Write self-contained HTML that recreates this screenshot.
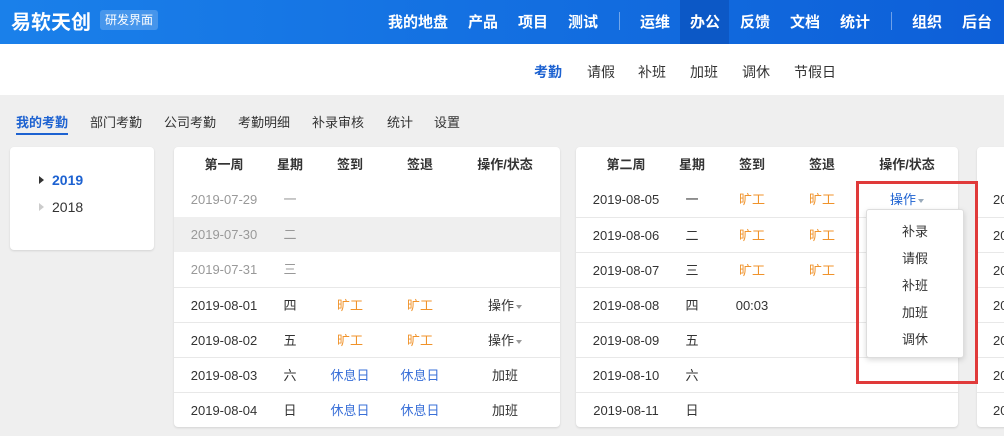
<!DOCTYPE html>
<html><head><meta charset="utf-8"><style>
*{margin:0;padding:0;box-sizing:border-box}
body{width:1004px;height:436px;overflow:hidden;background:#efefef;font-family:"Liberation Sans","Noto Sans CJK SC",sans-serif;position:relative;color:#333;font-size:13px}
.a{position:absolute;white-space:nowrap}
.hdr{position:absolute;left:0;top:0;width:1004px;height:44px;background:linear-gradient(90deg,#1a80ea,#0d5fd8)}
.nav{color:#fff;font-size:15px;font-weight:bold;top:11px}
.sub{position:absolute;left:0;top:44px;width:1004px;height:51px;background:#fff}
.sn{font-size:14px;top:62px;color:#333}
.tab{font-size:13px;top:112px;color:#333}
.card{position:absolute;background:#fff;border-radius:4px;box-shadow:0 1px 2px rgba(0,0,0,.12)}
.row{position:absolute;left:0;height:35px;border-top:1px solid #e8e8e8}
.c{position:absolute;text-align:center;font-size:13px;line-height:35px;transform:translateX(-50%);white-space:nowrap}
.h{font-weight:bold;color:#333}
.g{color:#999}.o{color:#f0932b}.b{color:#3a70d8}
.tri{display:inline-block;width:0;height:0;border-left:3px solid transparent;border-right:3px solid transparent;border-top:4px solid #999;vertical-align:middle;margin-left:2px}
</style></head><body>
<div class="hdr"></div>
<div class="a" style="left:11px;top:6px;color:#fff;font-size:20px;font-weight:bold">易软天创</div>
<div class="a" style="left:100px;top:10px;height:20px;padding:0 5px;background:rgba(255,255,255,.2);border-radius:3px;color:#fff;font-size:12px;line-height:20px">研发界面</div>
<div class="a nav" style="left:388px">我的地盘</div>
<div class="a nav" style="left:468px">产品</div>
<div class="a nav" style="left:518px">项目</div>
<div class="a nav" style="left:568px">测试</div>
<div class="a" style="left:619px;top:12px;width:1px;height:18px;background:rgba(255,255,255,.4)"></div>
<div class="a nav" style="left:640px">运维</div>
<div class="a" style="left:680px;top:0;width:49px;height:44px;background:#0c58c6"></div>
<div class="a nav" style="left:690px">办公</div>
<div class="a nav" style="left:740px">反馈</div>
<div class="a nav" style="left:790px">文档</div>
<div class="a nav" style="left:840px">统计</div>
<div class="a" style="left:891px;top:12px;width:1px;height:18px;background:rgba(255,255,255,.4)"></div>
<div class="a nav" style="left:912px">组织</div>
<div class="a nav" style="left:962px">后台</div>
<div class="sub"></div>
<div class="a sn" style="left:534px;color:#1d62d1;font-weight:bold">考勤</div>
<div class="a sn" style="left:587px">请假</div>
<div class="a sn" style="left:638px">补班</div>
<div class="a sn" style="left:690px">加班</div>
<div class="a sn" style="left:742px">调休</div>
<div class="a sn" style="left:794px">节假日</div>
<div class="a tab" style="left:16px;color:#1d62d1;font-weight:bold">我的考勤</div>
<div class="a" style="left:16px;top:133px;width:52px;height:2px;background:#1d62d1"></div>
<div class="a tab" style="left:90px">部门考勤</div>
<div class="a tab" style="left:164px">公司考勤</div>
<div class="a tab" style="left:238px">考勤明细</div>
<div class="a tab" style="left:312px">补录审核</div>
<div class="a tab" style="left:387px">统计</div>
<div class="a tab" style="left:434px">设置</div>

<div class="card" style="left:10px;top:147px;width:144px;height:103px"></div>
<div class="a" style="left:39px;top:176px;width:0;height:0;border-top:4px solid transparent;border-bottom:4px solid transparent;border-left:5px solid #333"></div>
<div class="a" style="left:52px;top:172px;color:#1d62d1;font-weight:bold;font-size:14px">2019</div>
<div class="a" style="left:39px;top:203px;width:0;height:0;border-top:4px solid transparent;border-bottom:4px solid transparent;border-left:5px solid #ccc"></div>
<div class="a" style="left:52px;top:199px;font-size:14px">2018</div>

<!-- card1 -->
<div class="card" style="left:174px;top:147px;width:386px;height:280px">
 <div class="row" style="top:0;border:none;width:386px">
  <div class="c h" style="left:50px">第一周</div><div class="c h" style="left:116px">星期</div><div class="c h" style="left:176px">签到</div><div class="c h" style="left:246px">签退</div><div class="c h" style="left:331px">操作/状态</div></div>
 <div class="row" style="top:35px;border:none;width:386px"><div class="c g" style="left:50px">2019-07-29</div><div class="c g" style="left:116px">一</div></div>
 <div class="row" style="top:70px;border:none;width:386px;background:#efefef"><div class="c g" style="left:50px">2019-07-30</div><div class="c g" style="left:116px">二</div></div>
 <div class="row" style="top:105px;border:none;width:386px"><div class="c g" style="left:50px">2019-07-31</div><div class="c g" style="left:116px">三</div></div>
 <div class="row" style="top:140px;width:386px"><div class="c" style="left:50px">2019-08-01</div><div class="c" style="left:116px">四</div><div class="c o" style="left:176px">旷工</div><div class="c o" style="left:246px">旷工</div><div class="c" style="left:331px">操作<span class="tri"></span></div></div>
 <div class="row" style="top:175px;width:386px"><div class="c" style="left:50px">2019-08-02</div><div class="c" style="left:116px">五</div><div class="c o" style="left:176px">旷工</div><div class="c o" style="left:246px">旷工</div><div class="c" style="left:331px">操作<span class="tri"></span></div></div>
 <div class="row" style="top:210px;width:386px"><div class="c" style="left:50px">2019-08-03</div><div class="c" style="left:116px">六</div><div class="c b" style="left:176px">休息日</div><div class="c b" style="left:246px">休息日</div><div class="c" style="left:331px">加班</div></div>
 <div class="row" style="top:245px;width:386px"><div class="c" style="left:50px">2019-08-04</div><div class="c" style="left:116px">日</div><div class="c b" style="left:176px">休息日</div><div class="c b" style="left:246px">休息日</div><div class="c" style="left:331px">加班</div></div>
</div>

<!-- card2 -->
<div class="card" style="left:576px;top:147px;width:382px;height:280px">
 <div class="row" style="top:0;border:none;width:382px">
  <div class="c h" style="left:50px">第二周</div><div class="c h" style="left:116px">星期</div><div class="c h" style="left:176px">签到</div><div class="c h" style="left:246px">签退</div><div class="c h" style="left:331px">操作/状态</div></div>
 <div class="row" style="top:35px;border:none;width:382px"><div class="c" style="left:50px">2019-08-05</div><div class="c" style="left:116px">一</div><div class="c o" style="left:176px">旷工</div><div class="c o" style="left:246px">旷工</div><div class="c" style="left:331px;color:#1d62d1">操作<span class="tri" style="border-top-color:#9ab"></span></div></div>
 <div class="row" style="top:70px;width:382px"><div class="c" style="left:50px">2019-08-06</div><div class="c" style="left:116px">二</div><div class="c o" style="left:176px">旷工</div><div class="c o" style="left:246px">旷工</div></div>
 <div class="row" style="top:105px;width:382px"><div class="c" style="left:50px">2019-08-07</div><div class="c" style="left:116px">三</div><div class="c o" style="left:176px">旷工</div><div class="c o" style="left:246px">旷工</div></div>
 <div class="row" style="top:140px;width:382px"><div class="c" style="left:50px">2019-08-08</div><div class="c" style="left:116px">四</div><div class="c" style="left:176px">00:03</div></div>
 <div class="row" style="top:175px;width:382px"><div class="c" style="left:50px">2019-08-09</div><div class="c" style="left:116px">五</div></div>
 <div class="row" style="top:210px;width:382px"><div class="c" style="left:50px">2019-08-10</div><div class="c" style="left:116px">六</div></div>
 <div class="row" style="top:245px;width:382px"><div class="c" style="left:50px">2019-08-11</div><div class="c" style="left:116px">日</div></div>
</div>

<!-- card3 -->
<div class="card" style="left:977px;top:147px;width:40px;height:280px">
 <div class="row" style="top:35px;border:none;width:40px"><div class="a" style="left:16px;line-height:35px">2019</div></div>
 <div class="row" style="top:70px;width:40px"><div class="a" style="left:16px;line-height:35px">2019</div></div>
 <div class="row" style="top:105px;width:40px"><div class="a" style="left:16px;line-height:35px">2019</div></div>
 <div class="row" style="top:140px;width:40px"><div class="a" style="left:16px;line-height:35px">2019</div></div>
 <div class="row" style="top:175px;width:40px"><div class="a" style="left:16px;line-height:35px">2019</div></div>
 <div class="row" style="top:210px;width:40px"><div class="a" style="left:16px;line-height:35px">2019</div></div>
 <div class="row" style="top:245px;width:40px"><div class="a" style="left:16px;line-height:35px">2019</div></div>
</div>

<!-- dropdown -->
<div class="a" style="left:866px;top:209px;width:98px;height:149px;background:#fff;border:1px solid #ddd;border-radius:3px;box-shadow:0 2px 6px rgba(0,0,0,.15)"></div>
<div class="a" style="left:902px;top:221px">补录</div>
<div class="a" style="left:902px;top:248px">请假</div>
<div class="a" style="left:902px;top:275px">补班</div>
<div class="a" style="left:902px;top:302px">加班</div>
<div class="a" style="left:902px;top:329px">调休</div>
<div class="a" style="left:856px;top:181px;width:122px;height:203px;border:3px solid #e03a3a"></div>
</body></html>
